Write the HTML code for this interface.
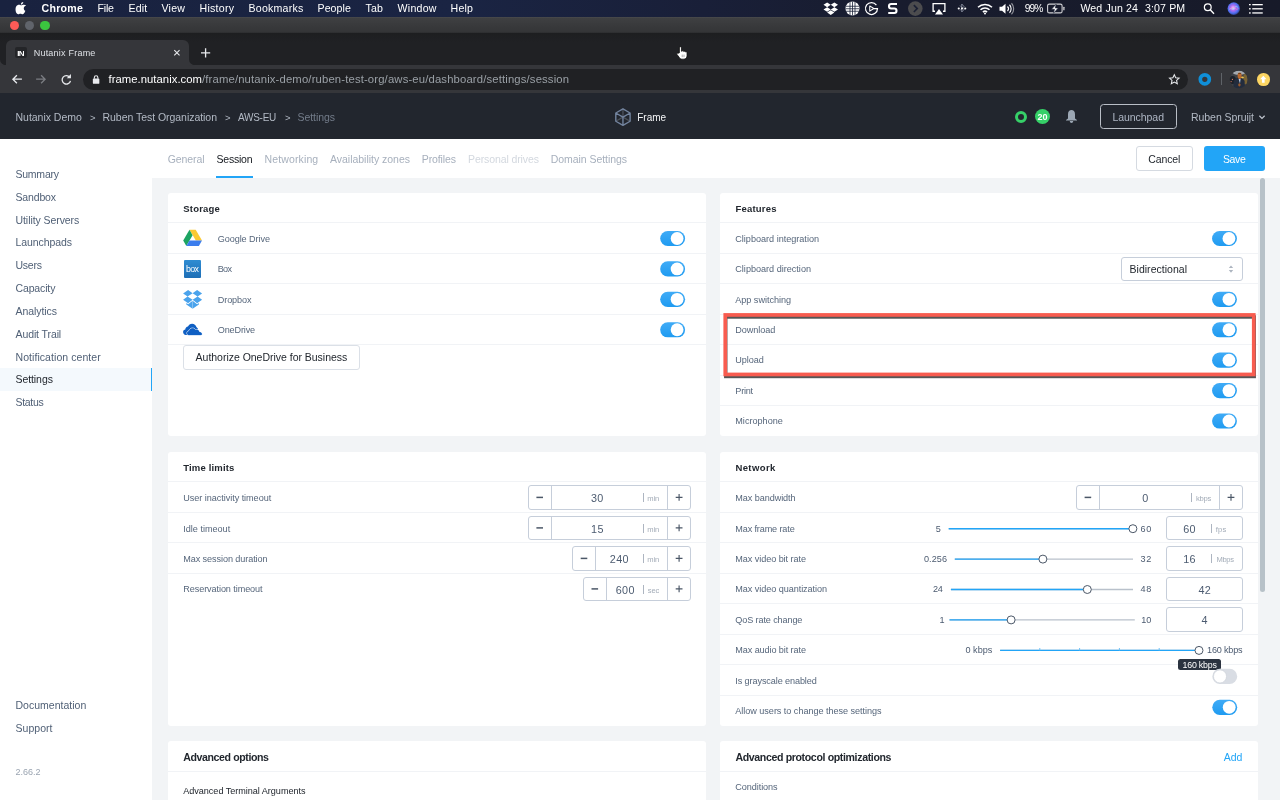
<!DOCTYPE html>
<html lang="en">
<head>
<meta charset="utf-8">
<title>Nutanix Frame</title>
<style>
html,body{margin:0;padding:0}
body{width:1280px;height:800px;overflow:hidden;position:relative;background:#f2f4f6;font-family:"Liberation Sans",sans-serif;-webkit-font-smoothing:antialiased}
#root{position:absolute;left:0;top:0;width:1280px;height:800px;overflow:hidden;will-change:transform}
.a{position:absolute}
.t{position:absolute;white-space:nowrap;line-height:1}
svg{position:absolute;overflow:visible}
.card{position:absolute;background:#fff;border-radius:3px}
.hr{position:absolute;height:1px;background:#f1f3f6}
.inp{position:absolute;box-sizing:border-box;border:1px solid #c6ceda;border-radius:3px;background:#fff}
.vl{position:absolute;width:1px;background:#c6ceda}
.btn{position:absolute;box-sizing:border-box;border-radius:3px}
</style>
</head>
<body>
<div id="root">
<div id="menubar"><div class="a" style="left:0.00px;top:0.00px;width:1280.00px;height:17.00px;background:linear-gradient(90deg,#19223f 0,#1a2443 36%,#191f38 55%,#181c2e 70%,#171a29 100%)"></div>
<svg style="left:16px;top:1px" width="11" height="14"><svg x="0" y="0.8" width="10.4" height="12.3" viewBox="0 0 170 200"><path fill="#fff" d="M150 68c-10 6-23 19-23 40 0 25 21 36 27 39-1 3-5 15-13 27-10 14-20 27-34 27s-18-8-35-8c-16 0-22 9-36 9s-23-12-34-28C-10 150-14 92 10 66c10-12 26-19 40-19 15 0 25 9 37 9 11 0 20-9 39-9 8 0 27 2 40 21zM108 32c7-8 11-19 11-30-10 1-22 7-29 15-6 7-12 18-10 29 11 1 22-6 28-14z"/></svg></svg>
<span class="t" style="left:41.50px;top:2px;font-size:10.6px;line-height:12px;color:#ffffff;letter-spacing:0.254px;font-weight:700;">Chrome</span>
<span class="t" style="left:97.50px;top:2px;font-size:10.6px;line-height:12px;color:#ffffff;letter-spacing:-0.193px;">File</span>
<span class="t" style="left:128.50px;top:2px;font-size:10.6px;line-height:12px;color:#ffffff;letter-spacing:0.145px;">Edit</span>
<span class="t" style="left:161.50px;top:2px;font-size:10.6px;line-height:12px;color:#ffffff;letter-spacing:0.240px;">View</span>
<span class="t" style="left:199.50px;top:2px;font-size:10.6px;line-height:12px;color:#ffffff;letter-spacing:0.255px;">History</span>
<span class="t" style="left:248.50px;top:2px;font-size:10.6px;line-height:12px;color:#ffffff;letter-spacing:0.214px;">Bookmarks</span>
<span class="t" style="left:317.50px;top:2px;font-size:10.6px;line-height:12px;color:#ffffff;letter-spacing:0.060px;">People</span>
<span class="t" style="left:365.50px;top:2px;font-size:10.6px;line-height:12px;color:#ffffff;letter-spacing:0.203px;">Tab</span>
<span class="t" style="left:397.50px;top:2px;font-size:10.6px;line-height:12px;color:#ffffff;letter-spacing:0.263px;">Window</span>
<span class="t" style="left:450.50px;top:2px;font-size:10.6px;line-height:12px;color:#ffffff;letter-spacing:0.234px;">Help</span>
<svg style="left:823px;top:2px" width="15" height="13"><svg x="0.5" y="0.5" width="14.5" height="12.5" viewBox="0 0 29 25"><path fill="#fff" d="M7.3 0 0 4.7l7.3 4.6 7.2-4.6zM21.7 0l-7.2 4.7 7.2 4.6L29 4.7zM0 14l7.3 4.7 7.2-4.7-7.2-4.7zM21.7 9.3 14.5 14l7.2 4.7L29 14zM7.3 20.2l7.2 4.7 7.2-4.7-7.2-4.6z"/></svg></svg>
<svg style="left:845px;top:1px" width="15" height="15"><svg x="0.5" y="0.5" width="14" height="14" viewBox="0 0 28 28"><circle cx="14" cy="14" r="14" fill="#fff"/><g stroke="#1b2238" stroke-width="1.6" fill="none"><path d="M1 9.5h26M0 14.5h28M1 19.5h26M9 1v26M14 0v28M19 1v26"/></g></svg></svg>
<svg style="left:864px;top:1px" width="15" height="15"><svg x="0.5" y="0.5" width="14" height="14" viewBox="0 0 28 28"><path d="M23.800 7.100A12 12 0 1 0 26 14H18.500" fill="none" stroke="#fff" stroke-width="2.500"/><path d="M10.500 8.800 18.500 14l-8 5.200z" fill="none" stroke="#fff" stroke-width="2.100" stroke-linejoin="round"/></svg></svg>
<svg style="left:887px;top:2px" width="11" height="13"><svg x="0.5" y="0.5" width="10.5" height="12" viewBox="0 0 21 24"><path d="M19 3H7.5C4.5 3 3 5 3 7.5S4.5 12 7.5 12h6c3 0 4.500 2 4.500 4.500S16.500 21 13.500 21H1.500" fill="none" stroke="#fff" stroke-width="4.2"/></svg></svg>
<svg style="left:908px;top:1px" width="15" height="15"><svg x="0" y="0.3" width="14.6" height="14.6" viewBox="0 0 30 30"><circle cx="15" cy="15" r="15" fill="#4c4c4e"/><path d="M12 8l7 7-7 7" fill="none" stroke="#1c2134" stroke-width="3.400"/></svg></svg>
<svg style="left:932px;top:2px" width="14" height="13"><svg x="0" y="0.5" width="14" height="12.5" viewBox="0 0 28 25"><path d="M6 17.500H2.200V2.200h23.600v15.300H22" fill="none" stroke="#fff" stroke-width="2.6"/><path d="M14 13l8 11H6z" fill="#fff"/></svg></svg>
<svg style="left:957px;top:2px" width="10" height="13"><svg x="0.5" y="0" width="9" height="13" viewBox="0 0 18 26"><path d="M5 7l8 8-4.500 5V4l4.500 5-8 8" fill="none" stroke="#aab0c0" stroke-width="1.8" opacity=".75"/><circle cx="2.500" cy="13" r="2.100" fill="#fff"/><circle cx="15.500" cy="13" r="2.100" fill="#fff"/><circle cx="9" cy="13" r="2" fill="#fff"/></svg></svg>
<svg style="left:977px;top:3px" width="16" height="12"><svg x="0" y="0" width="16" height="11.5" viewBox="0 0 32 23"><g fill="none" stroke="#fff" stroke-width="3" stroke-linecap="butt"><path d="M2 8.500a20 20 0 0 1 28 0"/><path d="M7 13.500a13 13 0 0 1 18 0"/><path d="M11.800 18.200a6.200 6.200 0 0 1 8.400 0"/></g><circle cx="16" cy="21" r="2" fill="#fff"/></svg></svg>
<svg style="left:999px;top:3px" width="15" height="12"><svg x="0.5" y="0" width="14" height="11.5" viewBox="0 0 28 23"><path d="M0 7.500h5L12 1.500v20l-7-6H0z" fill="#fff"/><g fill="none" stroke="#fff" stroke-width="2.200"><path d="M16 7a6.500 6.500 0 0 1 0 9"/><path d="M20 3.500a11.500 11.500 0 0 1 0 16"/><path d="M24 .5a16 16 0 0 1 0 22" opacity=".55"/></g></svg></svg>
<span class="t" style="left:1024.70px;top:3px;font-size:10.2px;line-height:11px;color:#ffffff;letter-spacing:-0.945px;">99%</span>
<svg style="left:1047px;top:3px" width="18" height="11"><svg x="0" y="0.5" width="18" height="10" viewBox="0 0 36 20"><rect x="1.200" y="1.200" width="29" height="17.600" rx="3.500" fill="none" stroke="#fff" stroke-width="2.200" opacity=".8"/><rect x="32.500" y="6.500" width="2.600" height="7" rx="1.200" fill="#fff" opacity=".8"/><path d="M18.500 1 9 11.500h6l-2 8 9.500-10.500h-6z" fill="#fff" stroke="#1b2238" stroke-width="1.200"/></svg></svg>
<span class="t" style="left:1080.40px;top:2px;font-size:10.6px;line-height:12px;color:#ffffff;letter-spacing:0.140px;">Wed Jun 24</span>
<span class="t" style="left:1145.00px;top:2px;font-size:10.6px;line-height:12px;color:#ffffff;letter-spacing:0.124px;">3:07 PM</span>
<svg style="left:1203px;top:3px" width="12" height="12"><svg x="0.5" y="0" width="11" height="11.5" viewBox="0 0 22 23"><circle cx="8.500" cy="8.500" r="6.800" fill="none" stroke="#fff" stroke-width="2.400"/><path d="M13.500 13.500 21 21.500" stroke="#fff" stroke-width="2.800"/></svg></svg>
<svg style="left:1227px;top:2px" width="14" height="13"><svg x="0.5" y="0.3" width="12.6" height="12.6" viewBox="0 0 26 26"><defs><radialGradient id="siri" cx=".45" cy=".45" r=".6"><stop offset="0" stop-color="#f1d8ff"/><stop offset=".35" stop-color="#b06cf0"/><stop offset=".7" stop-color="#4b6ff0"/><stop offset="1" stop-color="#2a2d6a"/></radialGradient></defs><circle cx="13" cy="13" r="13" fill="url(#siri)"/><path d="M4 15c4-6 7 3 10-3s5-3 8-1" fill="none" stroke="#7ff0ff" stroke-width="1.600" opacity=".8"/><path d="M4 12c5 4 8-5 12 0s5 2 6 0" fill="none" stroke="#ff7ad0" stroke-width="1.600" opacity=".8"/></svg></svg>
<svg style="left:1249px;top:4px" width="14" height="10"><svg x="0" y="0" width="14" height="10" viewBox="0 0 28 20"><g fill="#fff"><rect x="0" y="0" width="3.400" height="2.600"/><rect x="6.500" y="0" width="21" height="2.600"/><rect x="0" y="8.300" width="3.400" height="2.600"/><rect x="6.500" y="8.300" width="21" height="2.600"/><rect x="0" y="16.600" width="3.400" height="2.600"/><rect x="6.500" y="16.600" width="21" height="2.600"/></g></svg></svg></div>
<div id="titlebar"><div class="a" style="left:0.00px;top:16.50px;width:1280.00px;height:16.50px;background:linear-gradient(#4b4c4e 0,#3f4042 7%,#393a3c 50%,#343537 93%,#2a2b2d 100%)"></div>
<div class="a" style="left:9.90px;top:20.50px;width:9.40px;height:9.40px;background:#fc5b57;border-radius:50%"></div>
<div class="a" style="left:25.10px;top:20.50px;width:9.40px;height:9.40px;background:#60646b;border-radius:50%"></div>
<div class="a" style="left:40.40px;top:20.50px;width:9.40px;height:9.40px;background:#3bc43f;border-radius:50%"></div></div>
<div id="chrome"><div class="a" style="left:0.00px;top:33.00px;width:1280.00px;height:32.00px;background:linear-gradient(#1d1e20 0,#202124 30%)"></div>
<div class="a" style="left:0.00px;top:65.00px;width:1280.00px;height:28.00px;background:#35363a"></div>
<div class="a" style="left:6.00px;top:40.00px;width:183.00px;height:26.00px;background:#35363a;border-radius:6px 6px 0 0"></div>
<svg style="left:0px;top:59px" width="196" height="7"><svg x="0" y="0.2" width="196" height="6" viewBox="0 0 196 6"><path d="M0 6V0a6 6 0 0 0 6 6zM195 6h-6V0a6 6 0 0 0 6 6z" fill="#35363a"/></svg></svg>
<div class="a" style="left:15.20px;top:46.90px;width:11.80px;height:10.90px;background:#242528;border-radius:2px"></div>
<span class="t" style="left:17.20px;top:49px;font-size:8px;line-height:9px;color:#fff;font-weight:700;letter-spacing:-0.6px;">IN</span>
<span class="t" style="left:33.70px;top:48px;font-size:9px;line-height:10px;color:#dee1e6;letter-spacing:0.222px;">Nutanix Frame</span>
<svg style="left:173px;top:49px" width="8" height="7"><svg x="0.6" y="0.4" width="6.6" height="6.6" viewBox="0 0 10 10"><path d="M1 1l8 8M9 1 1 9" stroke="#e8eaed" stroke-width="1.700" fill="none"/></svg></svg>
<svg style="left:201px;top:48px" width="10" height="10"><svg x="0" y="0.2" width="9.2" height="9.2" viewBox="0 0 12 12"><path d="M6 0v12M0 6h12" stroke="#e8eaed" stroke-width="1.700" fill="none"/></svg></svg>
<svg style="left:11px;top:74px" width="11" height="11"><svg x="0.8" y="0.2" width="10.2" height="10" viewBox="0 0 20 20"><path d="M20 10H3M10 2 2 10l8 8" stroke="#e8eaed" stroke-width="2.600" fill="none"/></svg></svg>
<svg style="left:36px;top:74px" width="11" height="11"><svg x="0" y="0.2" width="10.2" height="10" viewBox="0 0 20 20"><path d="M0 10h17M10 2l8 8-8 8" stroke="#7b7d82" stroke-width="2.600" fill="none"/></svg></svg>
<svg style="left:60px;top:73px" width="12" height="12"><svg x="0.5" y="0.6" width="11" height="11.4" viewBox="0 0 22 23"><path d="M18.500 7.500A8.500 8.500 0 1 0 20 14.500" stroke="#e8eaed" stroke-width="2.600" fill="none"/><path d="M21 1v8.500h-8.500z" fill="#e8eaed"/></svg></svg>
<div class="a" style="left:82.70px;top:68.60px;width:1105.50px;height:21.40px;background:#202124;border-radius:11px"></div>
<svg style="left:92px;top:74px" width="8" height="10"><svg x="0.8" y="0.8" width="6.6" height="9" viewBox="0 0 13 18"><path d="M3 8V5.500a3.500 3.500 0 0 1 7 0V8" fill="none" stroke="#e8eaed" stroke-width="2.200"/><rect x="0" y="7.500" width="13" height="10.500" rx="1.800" fill="#e8eaed"/></svg></svg>
<span class="t" style="left:108.50px;top:73px;font-size:11.3px;line-height:12px;color:#ffffff;letter-spacing:0.035px;">frame.nutanix.com</span>
<span class="t" style="left:202.00px;top:73px;font-size:11.3px;line-height:12px;color:#9aa0a6;letter-spacing:0.145px;">/frame/nutanix-demo/ruben-test-org/aws-eu/dashboard/settings/session</span>
<svg style="left:1168px;top:73px" width="12" height="12"><svg x="0.6" y="0.6" width="11.4" height="11" viewBox="0 0 24 23"><path d="M12 2.200l3 6.600 7.100.8-5.300 4.800 1.500 7L12 17.800 5.700 21.400l1.500-7L1.900 9.600 9 8.800z" fill="none" stroke="#e8eaed" stroke-width="2.200" stroke-linejoin="miter"/></svg></svg>
<svg style="left:1198px;top:72px" width="14" height="14"><svg x="0.4" y="0.9" width="12.8" height="12.8" viewBox="0 0 12.800 12.800"><circle cx="6.400" cy="6.400" r="4.500" fill="none" stroke="#0f8fd8" stroke-width="3.700"/></svg></svg>
<div class="a" style="left:1221.00px;top:73.00px;width:1.00px;height:12.20px;background:#5f6368"></div>
<svg style="left:1229px;top:70px" width="19" height="19"><svg x="0.8" y="0.6" width="17.8" height="17.8" viewBox="0 0 178 178"><defs><clipPath id="avc"><circle cx="89" cy="89" r="89"/></clipPath></defs><g clip-path="url(#avc)"><rect width="178" height="178" fill="#3d4046"/><ellipse cx="92" cy="22" rx="62" ry="20" fill="#a3a8ae"/><rect x="138" y="36" width="40" height="100" fill="#7b6433"/><ellipse cx="126" cy="68" rx="15" ry="10" fill="#ecc64e"/><ellipse cx="28" cy="95" rx="34" ry="40" fill="#1c2129"/><circle cx="26" cy="88" r="6" fill="#e07a5f"/><circle cx="13" cy="110" r="6" fill="#e07a5f"/><path d="M34 178 40 104Q58 68 92 72q34-2 56 30l3 76z" fill="#232c3d"/><path d="M88 84h20l-6 44z" fill="#b7cde6"/><ellipse cx="98" cy="52" rx="20" ry="33" fill="#b9692f"/><path d="M78 36q20-26 40 0-20-8-40 0z" fill="#5a3517"/><ellipse cx="96" cy="142" rx="12" ry="16" fill="#9c5a2c"/></g></svg></svg>
<div class="a" style="left:1257.00px;top:73.00px;width:12.60px;height:12.60px;border-radius:50%;background:#fdd663"></div>
<svg style="left:1260px;top:75px" width="7" height="8"><svg x="0" y="0.7" width="6.6" height="7" viewBox="0 0 12 13"><path d="M6 0l6 6.500H8.500V13h-5V6.500H0z" fill="#fff"/></svg></svg>
<svg style="left:675px;top:46px" width="13" height="14"><svg x="0.8" y="0.2" width="11.8" height="13.2" viewBox="0 0 23 26"><path d="M7 13V3a2 2 0 0 1 4 0v7l1.200-.3a2 2 0 0 1 3.400.8 2 2 0 0 1 3.400.9 1.900 1.900 0 0 1 3 1.500V19c0 3.500-2.500 6.500-6 6.500H12c-2.300 0-3.800-1.200-5.200-3.200L2 16c-1-1.500.9-3 2.300-2z" fill="#fff" stroke="#0c0c0c" stroke-width="1.500"/><path d="M12.500 16.500v5M16 16.500v5" stroke="#777" stroke-width="1.200"/></svg></svg></div>
<div id="appheader"><div class="a" style="left:0.00px;top:93.00px;width:1280.00px;height:45.50px;background:#22262e"></div>
<span class="t" style="left:15.50px;top:111px;font-size:10.5px;line-height:12px;color:#b3bac5;letter-spacing:-0.021px;">Nutanix Demo</span>
<span class="t" style="left:90.00px;top:112px;font-size:9.5px;line-height:11px;color:#b3bac5;">&gt;</span>
<span class="t" style="left:102.50px;top:111px;font-size:10.5px;line-height:12px;color:#b3bac5;letter-spacing:-0.040px;">Ruben Test Organization</span>
<span class="t" style="left:225.00px;top:112px;font-size:9.5px;line-height:11px;color:#b3bac5;">&gt;</span>
<span class="t" style="left:238.00px;top:112px;font-size:10px;line-height:11px;color:#b3bac5;letter-spacing:-0.268px;">AWS-EU</span>
<span class="t" style="left:285.00px;top:112px;font-size:9.5px;line-height:11px;color:#b3bac5;">&gt;</span>
<span class="t" style="left:297.50px;top:111px;font-size:10.5px;line-height:12px;color:#737c8a;letter-spacing:-0.065px;">Settings</span>
<svg style="left:614px;top:107px" width="18" height="20"><svg x="0.7" y="0.9" width="16.5" height="18.4" viewBox="0 0 18 20"><g fill="none" stroke-width="1.500" stroke-linejoin="round"><path d="M9 10V1M9 10 1.200 14.500M9 10l7.800 4.500" stroke="#4b5059"/><path d="M9 1l7.800 4.500v9L9 19l-7.800-4.500v-9zM9 10 1.200 5.500M9 10l7.800-4.500M9 10v9" stroke="#73849f"/></g></svg></svg>
<span class="t" style="left:637.30px;top:112px;font-size:10px;line-height:11px;color:#f4f5f7;letter-spacing:-0.052px;">Frame</span>
<div class="a" style="left:1015.00px;top:110.50px;width:12.00px;height:12.00px;border-radius:50%;box-sizing:border-box;border:3px solid #36d068"></div>
<div class="a" style="left:1034.70px;top:108.80px;width:15.30px;height:15.30px;border-radius:50%;background:#36d068"></div>
<span class="t" style="left:1037.59px;top:112px;font-size:9px;line-height:10px;color:#fff;font-weight:700;">20</span>
<svg style="left:1065px;top:109px" width="13" height="15"><svg x="0.8" y="0.8" width="11.4" height="13.4" viewBox="0 0 114 134"><path d="M22 88V44C22 16 38 2 57 2s35 14 35 42v44l20 13v6H2v-6zM40 113h34c0 14-10 19-17 19s-17-5-17-19z" fill="#9ca7b4"/></svg></svg>
<div class="btn" style="left:1100.00px;top:104.00px;width:76.70px;height:25.20px;border:1px solid #b9bec6;border-radius:3.500px"></div>
<span class="t" style="left:1112.50px;top:111px;font-size:10.5px;line-height:12px;color:#aeb6c4;letter-spacing:-0.059px;">Launchpad</span>
<span class="t" style="left:1191.00px;top:111px;font-size:10.5px;line-height:12px;color:#b3bac5;letter-spacing:-0.052px;">Ruben Spruijt</span>
<svg style="left:1258px;top:115px" width="8" height="5"><svg x="0.8" y="0.2" width="6.4" height="4.2" viewBox="0 0 12 8"><path d="M1 1l5 5 5-5" fill="none" stroke="#c3c8d1" stroke-width="2.200"/></svg></svg></div>
<div id="sidebar"><div class="a" style="left:0.00px;top:138.50px;width:152.40px;height:661.50px;background:#fff"></div>
<div class="a" style="left:0.00px;top:368.00px;width:152.40px;height:22.90px;background:#f4f9fd"></div>
<div class="a" style="left:150.60px;top:368.00px;width:1.80px;height:22.90px;background:#22a5f7"></div>
<span class="t" style="left:15.50px;top:168px;font-size:10.5px;line-height:12px;color:#4f5f75;letter-spacing:-0.240px;">Summary</span>
<span class="t" style="left:15.50px;top:191px;font-size:10.5px;line-height:12px;color:#4f5f75;letter-spacing:-0.159px;">Sandbox</span>
<span class="t" style="left:15.50px;top:214px;font-size:10.5px;line-height:12px;color:#4f5f75;letter-spacing:-0.069px;">Utility Servers</span>
<span class="t" style="left:15.50px;top:236px;font-size:10.5px;line-height:12px;color:#4f5f75;letter-spacing:-0.080px;">Launchpads</span>
<span class="t" style="left:15.50px;top:259px;font-size:10.5px;line-height:12px;color:#4f5f75;letter-spacing:-0.230px;">Users</span>
<span class="t" style="left:15.50px;top:282px;font-size:10.5px;line-height:12px;color:#4f5f75;letter-spacing:-0.137px;">Capacity</span>
<span class="t" style="left:15.50px;top:305px;font-size:10.5px;line-height:12px;color:#4f5f75;letter-spacing:-0.077px;">Analytics</span>
<span class="t" style="left:15.50px;top:328px;font-size:10.5px;line-height:12px;color:#4f5f75;letter-spacing:-0.099px;">Audit Trail</span>
<span class="t" style="left:15.50px;top:351px;font-size:10.5px;line-height:12px;color:#4f5f75;letter-spacing:0.064px;">Notification center</span>
<span class="t" style="left:15.50px;top:373px;font-size:10.5px;line-height:12px;color:#22272e;letter-spacing:-0.079px;">Settings</span>
<span class="t" style="left:15.50px;top:396px;font-size:10.5px;line-height:12px;color:#4f5f75;letter-spacing:-0.296px;">Status</span>
<span class="t" style="left:15.50px;top:699px;font-size:10.5px;line-height:12px;color:#4f5f75;letter-spacing:0.015px;">Documentation</span>
<span class="t" style="left:15.50px;top:722px;font-size:10.5px;line-height:12px;color:#4f5f75;letter-spacing:0.036px;">Support</span>
<span class="t" style="left:15.50px;top:767px;font-size:9px;line-height:10px;color:#9aa4b1;letter-spacing:-0.006px;">2.66.2</span></div>
<div id="tabs"><div class="a" style="left:152.40px;top:138.50px;width:1127.60px;height:39.10px;background:#fff"></div>
<span class="t" style="left:167.80px;top:153px;font-size:10.5px;line-height:12px;color:#a7b0bd;letter-spacing:-0.110px;">General</span>
<span class="t" style="left:216.50px;top:153px;font-size:10.5px;line-height:12px;color:#14181e;letter-spacing:-0.227px;">Session</span>
<span class="t" style="left:264.50px;top:153px;font-size:10.5px;line-height:12px;color:#a7b0bd;letter-spacing:0.130px;">Networking</span>
<span class="t" style="left:330.00px;top:153px;font-size:10.5px;line-height:12px;color:#a7b0bd;letter-spacing:-0.021px;">Availability zones</span>
<span class="t" style="left:421.80px;top:153px;font-size:10.5px;line-height:12px;color:#a7b0bd;letter-spacing:-0.117px;">Profiles</span>
<span class="t" style="left:468.00px;top:153px;font-size:10.5px;line-height:12px;color:#d3d8df;letter-spacing:-0.098px;">Personal drives</span>
<span class="t" style="left:550.80px;top:153px;font-size:10.5px;line-height:12px;color:#a7b0bd;letter-spacing:-0.060px;">Domain Settings</span>
<div class="a" style="left:216.30px;top:175.70px;width:36.50px;height:1.90px;background:#22a5f7"></div>
<div class="btn" style="left:1135.50px;top:146.30px;width:57.10px;height:24.60px;border:1px solid #d5dae1;background:#fff"></div>
<span class="t" style="left:1148.30px;top:153px;font-size:10.5px;line-height:12px;color:#22272e;letter-spacing:-0.138px;">Cancel</span>
<div class="btn" style="left:1204.00px;top:146.30px;width:61.00px;height:24.60px;background:#22a5f7"></div>
<span class="t" style="left:1223.00px;top:153px;font-size:10.5px;line-height:12px;color:#fff;letter-spacing:-0.379px;">Save</span>
<div class="a" style="left:1260.00px;top:177.60px;width:5.00px;height:414.40px;background:#b7c1c8;border-radius:2.500px"></div></div>
<div id="content"><svg width="0" height="0" style="left:0;top:0"><defs><linearGradient id="tg" x1="0" y1="0" x2="0" y2="1"><stop offset="0" stop-color="#40abf6"/><stop offset="1" stop-color="#1f9bf1"/></linearGradient></defs></svg>
<div class="card" style="left:167.60px;top:192.50px;width:538.40px;height:243.70px;"></div>
<span class="t" style="left:183.25px;top:203px;font-size:9.5px;line-height:11px;color:#22272e;letter-spacing:0.196px;font-weight:700;">Storage</span>
<div class="hr" style="left:167.60px;top:222.00px;width:538.40px;height:1.00px;"></div>
<div class="hr" style="left:167.60px;top:253.00px;width:538.40px;height:1.00px;"></div>
<div class="hr" style="left:167.60px;top:283.00px;width:538.40px;height:1.00px;"></div>
<div class="hr" style="left:167.60px;top:314.00px;width:538.40px;height:1.00px;"></div>
<div class="hr" style="left:167.60px;top:344.00px;width:538.40px;height:1.00px;"></div>
<span class="t" style="left:217.70px;top:234px;font-size:9.1px;line-height:10px;color:#56667b;letter-spacing:-0.071px;">Google Drive</span>
<svg style="left:660px;top:230px" width="26" height="17"><svg x="0.2" y="0.9" width="24.9" height="15.2" viewBox="0 0 24.900 15.200"><rect width="24.900" height="15.200" rx="7.600" fill="url(#tg)"/><circle cx="16.900" cy="7.600" r="6.400" fill="#fff"/></svg></svg>
<span class="t" style="left:217.70px;top:264px;font-size:9.1px;line-height:10px;color:#56667b;letter-spacing:-0.686px;">Box</span>
<svg style="left:660px;top:261px" width="26" height="16"><svg x="0.2" y="0.32" width="24.9" height="15.2" viewBox="0 0 24.900 15.200"><rect width="24.900" height="15.200" rx="7.600" fill="url(#tg)"/><circle cx="16.900" cy="7.600" r="6.400" fill="#fff"/></svg></svg>
<span class="t" style="left:217.70px;top:295px;font-size:9.1px;line-height:10px;color:#56667b;letter-spacing:-0.079px;">Dropbox</span>
<svg style="left:660px;top:291px" width="26" height="16"><svg x="0.2" y="0.74" width="24.9" height="15.2" viewBox="0 0 24.900 15.200"><rect width="24.900" height="15.200" rx="7.600" fill="url(#tg)"/><circle cx="16.900" cy="7.600" r="6.400" fill="#fff"/></svg></svg>
<span class="t" style="left:217.70px;top:325px;font-size:9.1px;line-height:10px;color:#56667b;letter-spacing:-0.132px;">OneDrive</span>
<svg style="left:660px;top:322px" width="26" height="16"><svg x="0.2" y="0.16" width="24.9" height="15.2" viewBox="0 0 24.900 15.200"><rect width="24.900" height="15.200" rx="7.600" fill="url(#tg)"/><circle cx="16.900" cy="7.600" r="6.400" fill="#fff"/></svg></svg>
<svg style="left:183px;top:229px" width="19" height="17"><svg x="0.2" y="0.8" width="18.8" height="16.2" viewBox="0 0 188 162"><path d="M63 0h62l63 108h-62z" fill="#fbc934"/><path d="M63 0 94 54 31 162 0 108z" fill="#1da462"/><path d="M62.500 108H188l-31 54H31z" fill="#3b7ded"/></svg></svg>
<div class="a" style="left:183.60px;top:259.90px;width:17.80px;height:17.80px;background:linear-gradient(#2f8cd2,#1d6eb6);border-radius:1px"></div>
<span class="t" style="left:186.00px;top:264px;font-size:8.8px;line-height:10px;color:#fff;letter-spacing:-0.594px;">box</span>
<svg style="left:183px;top:290px" width="20" height="19"><svg x="0.1" y="0" width="19" height="18.7" viewBox="0 0 190 187"><g fill="#4aa3ec"><path d="M50 0 0 36l45 30 50-33zM140 0l-45 33 50 33 45-30zM0 98l50 34 45-34-50-32zM145 66 95 98l45 34 50-34z"/><path d="M95 108l-45 34-18-12v14l63 43 63-43v-14l-18 12z"/></g><path d="M95 108v79" stroke="#fff" stroke-width="5" opacity=".7"/></svg></svg>
<svg style="left:183px;top:323px" width="20" height="13"><svg x="0" y="0.7" width="19.2" height="11.8" viewBox="0 0 192 118"><path d="M28 114C9 110-3 93 2 75c3-10 11-17 21-18 1-15 12-27 27-29C56 11 72 0 91 0c21 0 38 13 43 32l16 18v64z" fill="#0f5fc3"/><path d="M62 118c-13 0-24-10-24-23 0-12 9-22 21-23 3-17 18-29 36-29 13 0 24 6 31 17 4-2 8-3 12-3 15 0 27 11 29 25 14 1 25 11 25 22s-9 14-20 14z" fill="#0f5fc3" stroke="#fff" stroke-width="7"/><path d="M64 114c-12 0-22-8-22-19 0-10 8-19 19-20 3-16 17-27 34-27 12 0 23 6 29 16 4-2 8-3 13-3 13 0 24 10 26 23 12 1 24 9 24 19 0 7-8 11-17 11z" fill="#0f5fc3"/></svg></svg>
<div class="btn" style="left:183.00px;top:345.00px;width:176.70px;height:24.70px;border:1px solid #dbe0e7;background:#fff"></div>
<span class="t" style="left:195.60px;top:351px;font-size:10.5px;line-height:12px;color:#22272e;letter-spacing:-0.021px;">Authorize OneDrive for Business</span>
<div class="card" style="left:719.75px;top:192.50px;width:538.25px;height:243.70px;"></div>
<span class="t" style="left:735.40px;top:203px;font-size:9.5px;line-height:11px;color:#22272e;letter-spacing:0.213px;font-weight:700;">Features</span>
<div class="hr" style="left:719.75px;top:222.00px;width:538.25px;height:1.00px;"></div>
<div class="hr" style="left:719.75px;top:253.00px;width:538.25px;height:1.00px;"></div>
<div class="hr" style="left:719.75px;top:283.00px;width:538.25px;height:1.00px;"></div>
<div class="hr" style="left:719.75px;top:314.00px;width:538.25px;height:1.00px;"></div>
<div class="hr" style="left:719.75px;top:344.00px;width:538.25px;height:1.00px;"></div>
<div class="hr" style="left:719.75px;top:375.00px;width:538.25px;height:1.00px;"></div>
<div class="hr" style="left:719.75px;top:405.00px;width:538.25px;height:1.00px;"></div>
<span class="t" style="left:735.30px;top:234px;font-size:9.1px;line-height:10px;color:#56667b;letter-spacing:-0.011px;">Clipboard integration</span>
<svg style="left:1212px;top:230px" width="25" height="17"><svg x="0.05" y="0.9" width="24.9" height="15.2" viewBox="0 0 24.900 15.200"><rect width="24.900" height="15.200" rx="7.600" fill="url(#tg)"/><circle cx="16.900" cy="7.600" r="6.400" fill="#fff"/></svg></svg>
<span class="t" style="left:735.30px;top:264px;font-size:9.1px;line-height:10px;color:#56667b;letter-spacing:-0.007px;">Clipboard direction</span>
<span class="t" style="left:735.30px;top:295px;font-size:9.1px;line-height:10px;color:#56667b;letter-spacing:-0.034px;">App switching</span>
<svg style="left:1212px;top:291px" width="25" height="16"><svg x="0.05" y="0.74" width="24.9" height="15.2" viewBox="0 0 24.900 15.200"><rect width="24.900" height="15.200" rx="7.600" fill="url(#tg)"/><circle cx="16.900" cy="7.600" r="6.400" fill="#fff"/></svg></svg>
<span class="t" style="left:735.30px;top:325px;font-size:9.1px;line-height:10px;color:#56667b;letter-spacing:-0.065px;">Download</span>
<svg style="left:1212px;top:322px" width="25" height="16"><svg x="0.05" y="0.16" width="24.9" height="15.2" viewBox="0 0 24.900 15.200"><rect width="24.900" height="15.200" rx="7.600" fill="url(#tg)"/><circle cx="16.900" cy="7.600" r="6.400" fill="#fff"/></svg></svg>
<span class="t" style="left:735.30px;top:355px;font-size:9.1px;line-height:10px;color:#56667b;letter-spacing:-0.066px;">Upload</span>
<svg style="left:1212px;top:352px" width="25" height="16"><svg x="0.05" y="0.58" width="24.9" height="15.2" viewBox="0 0 24.900 15.200"><rect width="24.900" height="15.200" rx="7.600" fill="url(#tg)"/><circle cx="16.900" cy="7.600" r="6.400" fill="#fff"/></svg></svg>
<span class="t" style="left:735.30px;top:386px;font-size:9.1px;line-height:10px;color:#56667b;letter-spacing:-0.226px;">Print</span>
<svg style="left:1212px;top:383px" width="25" height="16"><svg x="0.05" y="0" width="24.9" height="15.2" viewBox="0 0 24.900 15.200"><rect width="24.900" height="15.200" rx="7.600" fill="url(#tg)"/><circle cx="16.900" cy="7.600" r="6.400" fill="#fff"/></svg></svg>
<span class="t" style="left:735.30px;top:416px;font-size:9.1px;line-height:10px;color:#56667b;">Microphone</span>
<svg style="left:1212px;top:413px" width="25" height="16"><svg x="0.05" y="0.42" width="24.9" height="15.2" viewBox="0 0 24.900 15.200"><rect width="24.900" height="15.200" rx="7.600" fill="url(#tg)"/><circle cx="16.900" cy="7.600" r="6.400" fill="#fff"/></svg></svg>
<div class="inp" style="left:1121.20px;top:257.30px;width:121.60px;height:23.50px;"></div>
<span class="t" style="left:1129.50px;top:263px;font-size:10.5px;line-height:12px;color:#22272e;letter-spacing:0.025px;">Bidirectional</span>
<svg style="left:1228px;top:265px" width="6" height="8"><svg x="0.8" y="0.3" width="4.4" height="7.6" viewBox="0 0 9 15"><path d="M4.500 0 9 5.500H0zM4.500 15 9 9.500H0z" fill="#adb5c0"/></svg></svg>
<svg style="left:718px;top:308px" width="544" height="76"><svg x="0" y="0" width="544" height="76" viewBox="0 0 544 76"><defs><filter id="rsh" x="-2%" y="-10%" width="104%" height="125%"><feGaussianBlur stdDeviation="0.700"/></filter></defs><rect x="7.750" y="9" width="528.500" height="59.500" fill="none" stroke="#2c2c2c" stroke-opacity=".8" stroke-width="3.400" filter="url(#rsh)"/><rect x="7.250" y="6.950" width="528.500" height="59.500" fill="none" stroke="#f85c4f" stroke-width="3.700"/></svg></svg>
<div class="card" style="left:167.60px;top:451.60px;width:538.40px;height:274.40px;"></div>
<span class="t" style="left:183.25px;top:462px;font-size:9.5px;line-height:11px;color:#22272e;letter-spacing:0.160px;font-weight:700;">Time limits</span>
<div class="hr" style="left:167.60px;top:481.00px;width:538.40px;height:1.00px;"></div>
<div class="hr" style="left:167.60px;top:512.00px;width:538.40px;height:1.00px;"></div>
<div class="hr" style="left:167.60px;top:542.00px;width:538.40px;height:1.00px;"></div>
<div class="hr" style="left:167.60px;top:573.00px;width:538.40px;height:1.00px;"></div>
<span class="t" style="left:183.25px;top:493px;font-size:9.1px;line-height:10px;color:#56667b;letter-spacing:-0.046px;">User inactivity timeout</span>
<div class="inp" style="left:528.10px;top:485.30px;width:162.70px;height:24.30px;"></div>
<div class="vl" style="left:551.10px;top:485.80px;width:1.00px;height:23.30px;"></div>
<div class="vl" style="left:666.80px;top:485.80px;width:1.00px;height:23.30px;"></div>
<svg style="left:535px;top:493px" width="9" height="9"><svg x="0.7" y="0.4" width="8" height="8" viewBox="0 0 8 8"><path d="M0.700 4h6.600" stroke="#4b5767" stroke-width="1.500"/></svg></svg>
<svg style="left:675px;top:493px" width="9" height="9"><svg x="0.1" y="0.4" width="8" height="8" viewBox="0 0 8 8"><path d="M0.600 4h6.800M4 0.600v6.800" stroke="#4b5767" stroke-width="1.150"/></svg></svg>
<span class="t" style="left:590.92px;top:492px;font-size:10.8px;line-height:12px;color:#4c5b70;letter-spacing:0.350px;">30</span>
<div class="a" style="left:642.80px;top:493.20px;width:1.00px;height:8.90px;background:#adb5c1"></div>
<span class="t" style="left:647.30px;top:494px;font-size:7.6px;line-height:9px;color:#a3acb8;letter-spacing:-0.125px;">min</span>
<span class="t" style="left:183.25px;top:524px;font-size:9.1px;line-height:10px;color:#56667b;letter-spacing:-0.006px;">Idle timeout</span>
<div class="inp" style="left:528.10px;top:515.80px;width:162.70px;height:24.30px;"></div>
<div class="vl" style="left:551.10px;top:516.30px;width:1.00px;height:23.30px;"></div>
<div class="vl" style="left:666.80px;top:516.30px;width:1.00px;height:23.30px;"></div>
<svg style="left:535px;top:523px" width="9" height="9"><svg x="0.7" y="0.9" width="8" height="8" viewBox="0 0 8 8"><path d="M0.700 4h6.600" stroke="#4b5767" stroke-width="1.500"/></svg></svg>
<svg style="left:675px;top:523px" width="9" height="9"><svg x="0.1" y="0.9" width="8" height="8" viewBox="0 0 8 8"><path d="M0.600 4h6.800M4 0.600v6.800" stroke="#4b5767" stroke-width="1.150"/></svg></svg>
<span class="t" style="left:591.12px;top:523px;font-size:10.8px;line-height:12px;color:#4c5b70;letter-spacing:0.350px;">15</span>
<div class="a" style="left:642.80px;top:523.70px;width:1.00px;height:8.90px;background:#adb5c1"></div>
<span class="t" style="left:647.30px;top:525px;font-size:7.6px;line-height:9px;color:#a3acb8;letter-spacing:-0.125px;">min</span>
<span class="t" style="left:183.25px;top:554px;font-size:9.1px;line-height:10px;color:#56667b;letter-spacing:-0.084px;">Max session duration</span>
<div class="inp" style="left:572.40px;top:546.30px;width:118.40px;height:24.30px;"></div>
<div class="vl" style="left:595.40px;top:546.80px;width:1.00px;height:23.30px;"></div>
<div class="vl" style="left:666.80px;top:546.80px;width:1.00px;height:23.30px;"></div>
<svg style="left:580px;top:554px" width="8" height="9"><svg x="0" y="0.4" width="8" height="8" viewBox="0 0 8 8"><path d="M0.700 4h6.600" stroke="#4b5767" stroke-width="1.500"/></svg></svg>
<svg style="left:675px;top:554px" width="9" height="9"><svg x="0.1" y="0.4" width="8" height="8" viewBox="0 0 8 8"><path d="M0.600 4h6.800M4 0.600v6.800" stroke="#4b5767" stroke-width="1.150"/></svg></svg>
<span class="t" style="left:609.84px;top:553px;font-size:10.8px;line-height:12px;color:#4c5b70;letter-spacing:0.350px;">240</span>
<div class="a" style="left:642.80px;top:554.20px;width:1.00px;height:8.90px;background:#adb5c1"></div>
<span class="t" style="left:647.30px;top:555px;font-size:7.6px;line-height:9px;color:#a3acb8;letter-spacing:-0.125px;">min</span>
<span class="t" style="left:183.25px;top:584px;font-size:9.1px;line-height:10px;color:#56667b;letter-spacing:-0.085px;">Reservation timeout</span>
<div class="inp" style="left:583.20px;top:576.80px;width:107.60px;height:24.30px;"></div>
<div class="vl" style="left:606.20px;top:577.30px;width:1.00px;height:23.30px;"></div>
<div class="vl" style="left:666.80px;top:577.30px;width:1.00px;height:23.30px;"></div>
<svg style="left:590px;top:584px" width="9" height="9"><svg x="0.8" y="0.9" width="8" height="8" viewBox="0 0 8 8"><path d="M0.700 4h6.600" stroke="#4b5767" stroke-width="1.500"/></svg></svg>
<svg style="left:675px;top:584px" width="9" height="9"><svg x="0.1" y="0.9" width="8" height="8" viewBox="0 0 8 8"><path d="M0.600 4h6.800M4 0.600v6.800" stroke="#4b5767" stroke-width="1.150"/></svg></svg>
<span class="t" style="left:615.74px;top:584px;font-size:10.8px;line-height:12px;color:#4c5b70;letter-spacing:0.350px;">600</span>
<div class="a" style="left:642.80px;top:584.70px;width:1.00px;height:8.90px;background:#adb5c1"></div>
<span class="t" style="left:647.80px;top:586px;font-size:7.6px;line-height:9px;color:#a3acb8;letter-spacing:-0.164px;">sec</span>
<div class="card" style="left:719.75px;top:451.60px;width:538.25px;height:274.40px;"></div>
<span class="t" style="left:735.40px;top:462px;font-size:9.5px;line-height:11px;color:#22272e;letter-spacing:0.419px;font-weight:700;">Network</span>
<div class="hr" style="left:719.75px;top:481.00px;width:538.25px;height:1.00px;"></div>
<div class="hr" style="left:719.75px;top:512.00px;width:538.25px;height:1.00px;"></div>
<div class="hr" style="left:719.75px;top:542.00px;width:538.25px;height:1.00px;"></div>
<div class="hr" style="left:719.75px;top:573.00px;width:538.25px;height:1.00px;"></div>
<div class="hr" style="left:719.75px;top:603.00px;width:538.25px;height:1.00px;"></div>
<div class="hr" style="left:719.75px;top:634.00px;width:538.25px;height:1.00px;"></div>
<div class="hr" style="left:719.75px;top:664.00px;width:538.25px;height:1.00px;"></div>
<div class="hr" style="left:719.75px;top:695.00px;width:538.25px;height:1.00px;"></div>
<span class="t" style="left:735.30px;top:493px;font-size:9.1px;line-height:10px;color:#56667b;letter-spacing:-0.073px;">Max bandwidth</span>
<span class="t" style="left:735.30px;top:524px;font-size:9.1px;line-height:10px;color:#56667b;letter-spacing:-0.135px;">Max frame rate</span>
<span class="t" style="left:735.30px;top:554px;font-size:9.1px;line-height:10px;color:#56667b;letter-spacing:-0.064px;">Max video bit rate</span>
<span class="t" style="left:735.30px;top:584px;font-size:9.1px;line-height:10px;color:#56667b;letter-spacing:-0.058px;">Max video quantization</span>
<span class="t" style="left:735.30px;top:615px;font-size:9.1px;line-height:10px;color:#56667b;letter-spacing:-0.119px;">QoS rate change</span>
<span class="t" style="left:735.30px;top:645px;font-size:9.1px;line-height:10px;color:#56667b;letter-spacing:-0.094px;">Max audio bit rate</span>
<span class="t" style="left:735.30px;top:676px;font-size:9.1px;line-height:10px;color:#56667b;letter-spacing:-0.101px;">Is grayscale enabled</span>
<span class="t" style="left:735.30px;top:706px;font-size:9.1px;line-height:10px;color:#56667b;letter-spacing:-0.037px;">Allow users to change these settings</span>
<div class="inp" style="left:1076.30px;top:485.30px;width:166.40px;height:24.30px;"></div>
<div class="vl" style="left:1099.30px;top:485.80px;width:1.00px;height:23.30px;"></div>
<div class="vl" style="left:1218.70px;top:485.80px;width:1.00px;height:23.30px;"></div>
<svg style="left:1083px;top:493px" width="9" height="9"><svg x="0.9" y="0.4" width="8" height="8" viewBox="0 0 8 8"><path d="M0.700 4h6.600" stroke="#4b5767" stroke-width="1.500"/></svg></svg>
<svg style="left:1227px;top:493px" width="8" height="9"><svg x="0" y="0.4" width="8" height="8" viewBox="0 0 8 8"><path d="M0.600 4h6.800M4 0.600v6.800" stroke="#4b5767" stroke-width="1.150"/></svg></svg>
<span class="t" style="left:1142.19px;top:492px;font-size:10.8px;line-height:12px;color:#4c5b70;letter-spacing:0.350px;">0</span>
<div class="a" style="left:1190.90px;top:493.20px;width:1.00px;height:8.90px;background:#adb5c1"></div>
<span class="t" style="left:1195.90px;top:494px;font-size:7.6px;line-height:9px;color:#a3acb8;letter-spacing:-0.216px;">kbps</span>
<span class="t" style="left:935.70px;top:524px;font-size:9.1px;line-height:10px;color:#4c5b70;">5</span>
<span class="t" style="left:1140.50px;top:524px;font-size:9.1px;line-height:10px;color:#4c5b70;letter-spacing:0.575px;">60</span>
<svg style="left:942px;top:522px" width="197" height="13"><svg x="0.7" y="0.7" width="196.3" height="12" viewBox="0 0 196.3 12"><path d="M6 6H190.3" stroke="#b9c1cb" stroke-width="1.300"/><path d="M6 6H190.2" stroke="#22a5f7" stroke-width="1.400"/><circle cx="190.2" cy="6" r="4" fill="#fff" stroke="#4b5767" stroke-width="1"/></svg></svg>
<span class="t" style="left:923.90px;top:554px;font-size:9.1px;line-height:10px;color:#4c5b70;letter-spacing:0.084px;">0.256</span>
<span class="t" style="left:1140.50px;top:554px;font-size:9.1px;line-height:10px;color:#4c5b70;letter-spacing:0.575px;">32</span>
<svg style="left:948px;top:553px" width="191" height="13"><svg x="0.8" y="0.1" width="190.2" height="12" viewBox="0 0 190.2 12"><path d="M6 6H184.2" stroke="#b9c1cb" stroke-width="1.300"/><path d="M6 6H94.1" stroke="#22a5f7" stroke-width="1.400"/><circle cx="94.1" cy="6" r="4" fill="#fff" stroke="#4b5767" stroke-width="1"/></svg></svg>
<span class="t" style="left:932.90px;top:584px;font-size:9.1px;line-height:10px;color:#4c5b70;letter-spacing:-0.225px;">24</span>
<span class="t" style="left:1140.50px;top:584px;font-size:9.1px;line-height:10px;color:#4c5b70;letter-spacing:0.575px;">48</span>
<svg style="left:944px;top:583px" width="195" height="13"><svg x="0.9" y="0.5" width="194.1" height="12" viewBox="0 0 194.1 12"><path d="M6 6H188.1" stroke="#b9c1cb" stroke-width="1.300"/><path d="M6 6H142.4" stroke="#22a5f7" stroke-width="1.400"/><circle cx="142.4" cy="6" r="4" fill="#fff" stroke="#4b5767" stroke-width="1"/></svg></svg>
<span class="t" style="left:939.40px;top:615px;font-size:9.1px;line-height:10px;color:#4c5b70;">1</span>
<span class="t" style="left:1141.30px;top:615px;font-size:9.1px;line-height:10px;color:#4c5b70;">10</span>
<svg style="left:943px;top:613px" width="198" height="13"><svg x="0.5" y="0.9" width="197.3" height="12" viewBox="0 0 197.3 12"><path d="M6 6H191.3" stroke="#b9c1cb" stroke-width="1.300"/><path d="M6 6H67.6" stroke="#22a5f7" stroke-width="1.400"/><circle cx="67.6" cy="6" r="4" fill="#fff" stroke="#4b5767" stroke-width="1"/></svg></svg>
<span class="t" style="left:965.50px;top:645px;font-size:9.1px;line-height:10px;color:#4c5b70;">0 kbps</span>
<span class="t" style="left:1207.10px;top:645px;font-size:9.1px;line-height:10px;color:#4c5b70;letter-spacing:-0.203px;">160 kbps</span>
<svg style="left:994px;top:644px" width="211" height="13"><svg x="0.1" y="0.4" width="210.9" height="12" viewBox="0 0 210.9 12"><path d="M6 6H204.9" stroke="#b9c1cb" stroke-width="1.300"/><path d="M6 6H204.9" stroke="#22a5f7" stroke-width="1.400"/><path d="M45.7 3.600V6" stroke="#6fc1f7" stroke-width="1"/><path d="M85.5 3.600V6" stroke="#6fc1f7" stroke-width="1"/><path d="M125.3 3.600V6" stroke="#6fc1f7" stroke-width="1"/><path d="M165.1 3.600V6" stroke="#6fc1f7" stroke-width="1"/><circle cx="204.9" cy="6" r="4" fill="#fff" stroke="#4b5767" stroke-width="1"/></svg></svg>
<div class="inp" style="left:1166.30px;top:515.80px;width:76.40px;height:24.30px;"></div>
<span class="t" style="left:1183.22px;top:523px;font-size:10.8px;line-height:12px;color:#4c5b70;letter-spacing:0.350px;">60</span>
<div class="a" style="left:1211.10px;top:523.70px;width:1.00px;height:8.90px;background:#adb5c1"></div>
<span class="t" style="left:1215.80px;top:525px;font-size:7.6px;line-height:9px;color:#a3acb8;letter-spacing:0.130px;">fps</span>
<div class="inp" style="left:1166.30px;top:546.30px;width:76.40px;height:24.30px;"></div>
<span class="t" style="left:1183.22px;top:553px;font-size:10.8px;line-height:12px;color:#4c5b70;letter-spacing:0.350px;">16</span>
<div class="a" style="left:1211.10px;top:554.20px;width:1.00px;height:8.90px;background:#adb5c1"></div>
<span class="t" style="left:1216.40px;top:555px;font-size:7.6px;line-height:9px;color:#a3acb8;letter-spacing:-0.293px;">Mbps</span>
<div class="inp" style="left:1166.30px;top:576.80px;width:76.40px;height:24.30px;"></div>
<span class="t" style="left:1198.42px;top:584px;font-size:10.8px;line-height:12px;color:#4c5b70;letter-spacing:0.350px;">42</span>
<div class="inp" style="left:1166.30px;top:607.30px;width:76.40px;height:24.30px;"></div>
<span class="t" style="left:1201.59px;top:614px;font-size:10.8px;line-height:12px;color:#4c5b70;letter-spacing:0.350px;">4</span>
<div class="a" style="left:1178.10px;top:658.50px;width:42.90px;height:11.90px;background:#2b3340;border-radius:2.500px"></div>
<span class="t" style="left:1182.50px;top:660px;font-size:8.8px;line-height:10px;color:#fff;letter-spacing:-0.200px;">160 kbps</span>
<svg style="left:1212px;top:668px" width="26" height="16"><svg x="0.3" y="0.8" width="24.9" height="15.2" viewBox="0 0 24.900 15.200"><rect width="24.900" height="15.200" rx="7.600" fill="#d9dde4"/><circle cx="7.700" cy="7.600" r="6.500" fill="#fff" stroke="#c3c8d0" stroke-width=".500"/></svg></svg>
<svg style="left:1212px;top:699px" width="26" height="16"><svg x="0.3" y="0.7" width="24.9" height="15.2" viewBox="0 0 24.900 15.200"><rect width="24.900" height="15.200" rx="7.600" fill="url(#tg)"/><circle cx="16.900" cy="7.600" r="6.400" fill="#fff"/></svg></svg>
<div class="card" style="left:167.60px;top:741.20px;width:538.40px;height:58.80px;border-radius:3px 3px 0 0"></div>
<span class="t" style="left:183.25px;top:751px;font-size:10.6px;line-height:12px;color:#22272e;letter-spacing:-0.405px;font-weight:700;">Advanced options</span>
<div class="hr" style="left:167.60px;top:771.00px;width:538.40px;height:1.00px;"></div>
<span class="t" style="left:183.25px;top:786px;font-size:9.1px;line-height:10px;color:#22272e;letter-spacing:-0.035px;">Advanced Terminal Arguments</span>
<div class="card" style="left:719.75px;top:741.20px;width:538.25px;height:58.80px;border-radius:3px 3px 0 0"></div>
<span class="t" style="left:735.40px;top:751px;font-size:10.6px;line-height:12px;color:#22272e;letter-spacing:-0.369px;font-weight:700;">Advanced protocol optimizations</span>
<div class="hr" style="left:719.75px;top:771.00px;width:538.25px;height:1.00px;"></div>
<span class="t" style="left:1223.80px;top:751px;font-size:10.5px;line-height:12px;color:#22a5f7;letter-spacing:-0.094px;">Add</span>
<span class="t" style="left:735.30px;top:782px;font-size:9.1px;line-height:10px;color:#56667b;letter-spacing:-0.076px;">Conditions</span></div>
</div>
</body>
</html>
